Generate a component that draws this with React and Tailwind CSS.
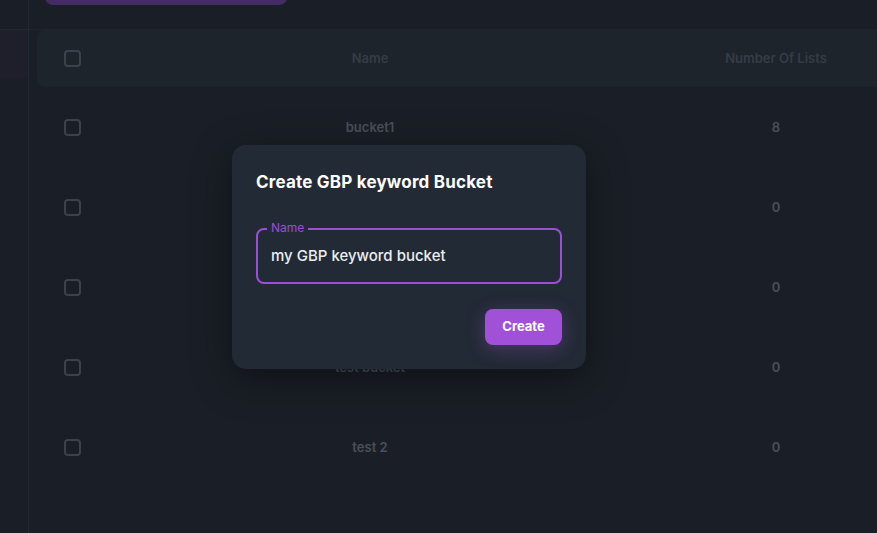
import React from "react";

const rows = [
  { name: "bucket1", count: 8 },
  { name: "local keywords", count: 0 },
  { name: "gbp test", count: 0 },
  { name: "test bucket", count: 0 },
  { name: "test 2", count: 0 },
];

function Box() {
  return <div className="w-[17px] h-[17px] rounded-[4px] border-2 border-[#3c424b]" />;
}

export default function App() {
  return (
    <div
      className="relative w-[877px] h-[533px] overflow-hidden bg-[#1a1f27] text-[#4a5058]"
      style={{ fontFamily: "Inter, 'Noto Sans', sans-serif" }}
    >
      <div className="flex h-full">
        {/* sidebar */}
        <div className="w-[29px] shrink-0 border-r border-[#222830] flex flex-col">
          <div className="h-[30px] border-b border-[#222830]" />
          <div className="h-[48px] bg-[#1f1f2b]" />
        </div>
        {/* main */}
        <div className="flex-1 flex flex-col min-w-0">
          <div className="h-[30px] shrink-0 border-b border-[#1f252d] relative">
            <div className="absolute left-[16px] top-[-30px] w-[242px] h-[35px] rounded-[8px] bg-[#452b66]" />
          </div>
          <div className="pl-[8px]">
            <div className="flex shrink-0 items-center h-[57px] rounded-l-[8px] bg-[#1e242c] w-[900px]">
              <div className="w-[63px] shrink-0 pl-[27px]">
                <Box />
              </div>
              <div className="w-[540px] shrink-0 text-center text-[13px] font-semibold text-[#363c45]">Name</div>
              <div className="w-[272px] shrink-0 text-center text-[13px] font-semibold text-[#363c45]">Number Of Lists</div>
            </div>
            {rows.map((r) => (
              <div key={r.name} className="flex shrink-0 w-[900px] items-center h-[80px] pt-[1px]">
                <div className="w-[63px] shrink-0 pl-[27px]">
                  <Box />
                </div>
                <div className="w-[540px] shrink-0 text-center text-[13px] font-semibold text-[#4a5058]">{r.name}</div>
                <div className="w-[272px] shrink-0 text-center text-[13px] font-semibold text-[#4a5058]">{r.count}</div>
              </div>
            ))}
          </div>
        </div>
      </div>

      {/* modal */}
      <div className="absolute left-[232px] top-[145px] w-[354px] rounded-[14px] bg-[#222a35] px-6 pt-[25px] pb-6 shadow-[0_10px_40px_rgba(0,0,0,0.45)]">
        <h2 className="text-[17px] leading-[24px] font-bold text-white tracking-[0.2px]">Create GBP keyword Bucket</h2>
        <div className="relative mt-[34px] h-[56px] rounded-[8px] border-2 border-[#9b4fd2] flex items-center px-[13px]">
          <span className="absolute left-[9px] top-[-9px] bg-[#222a35] px-[4px] text-[12px] leading-[14px] text-[#9b4fd2]">
            Name
          </span>
          <span className="text-[15px] font-medium text-[#eceef1]">my GBP keyword bucket</span>
        </div>
        <div className="flex justify-end mt-[25px]">
          <button className="w-[77px] h-[36px] rounded-[8px] bg-[#a051d8] text-white text-[13px] font-bold shadow-[0_4px_18px_rgba(160,81,216,0.35)]">
            Create
          </button>
        </div>
      </div>
    </div>
  );
}
